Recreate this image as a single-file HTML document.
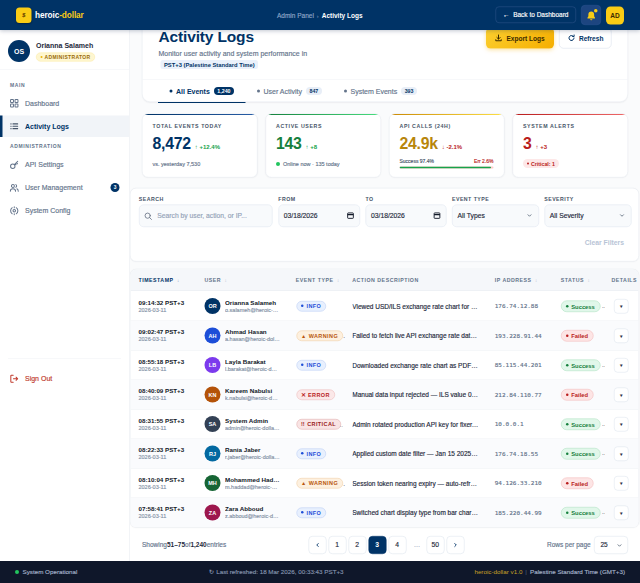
<!DOCTYPE html>
<html lang="en">
<head>
<meta charset="utf-8">
<title>Activity Logs - heroic-dollar</title>
<style>
*{box-sizing:border-box;margin:0;padding:0}
html,body{width:640px;height:583px;overflow:hidden;background:#fafbfc}
body{font-family:"Liberation Sans",Arial,sans-serif;color:#1e293b}
#app{-webkit-text-stroke:.3px currentColor;position:absolute;left:0;top:0;width:1280px;height:1166px;transform:scale(.5);transform-origin:0 0;overflow:hidden;background:#fafbfc}
/* ---------- top bar ---------- */
.top{position:absolute;left:0;top:0;width:1280px;height:60px;background:#003366;z-index:20;box-shadow:0 2px 8px rgba(10,30,70,.25)}
.logo{position:absolute;left:32px;top:14.500px;width:31px;height:31px;border-radius:7px;background:#facc15;box-shadow:0 1px 3px rgba(0,0,0,.3)}
.logo span{position:absolute;left:0;top:9px;width:31px;text-align:center;font-size:11px;font-weight:700;color:#6b4700;font-style:italic;line-height:13px}
.brand{position:absolute;left:70px;top:20px;font-size:16.500px;font-weight:700;color:#fff;letter-spacing:-.2px}
.brand b{color:#facc15}
.crumb{position:absolute;left:554px;top:24px;font-size:13px;color:#8fa6c8;white-space:nowrap}
.crumb i{font-style:normal;color:#5f7aa5;margin:0 6px;font-size:11px}
.crumb b{color:#fff}
.back{position:absolute;left:991px;top:13px;width:161px;height:33px;border:1px solid #33568d;border-radius:7px;color:#fff;font-size:13px;line-height:31px;text-align:center;white-space:nowrap}
.bell{position:absolute;left:1162px;top:10px;width:40px;height:40px;border-radius:8px;background:#1d4580;border:1px solid #2d5490}
.bell svg{position:absolute;left:8px;top:9px}
.bell em{position:absolute;left:25px;top:7px;width:7px;height:7px;border-radius:50%;background:#facc15}
.me{position:absolute;left:1212px;top:13px;width:36px;height:36px;border-radius:9px;background:#facc15;color:#3b2a00;font-size:13px;font-weight:700;text-align:center;line-height:36px}
/* ---------- sidebar ---------- */
.side{position:absolute;left:0;top:59px;width:259px;height:1063px;background:#fff;border-right:1px solid #e6eaf0;z-index:5}
.prof{position:absolute;left:0;top:0;width:258px;height:80px;border-bottom:1px solid #eef1f5}
.prof .av{position:absolute;left:16px;top:21px;width:44px;height:44px;border-radius:50%;background:#003366;color:#fff;font-size:14px;font-weight:700;text-align:center;line-height:44px}
.prof .nm{position:absolute;left:72px;top:23px;font-size:14px;font-weight:700;color:#1e293b;white-space:nowrap}
.prof .rl{position:absolute;left:72px;top:46px;height:18px;padding:0 8px;border-radius:9px;background:#fef6d0;border:1px solid #fbe9a0;color:#9a6b08;font-size:10px;font-weight:700;letter-spacing:.7px;line-height:16px;white-space:nowrap}
.prof .rl:before{content:"";display:inline-block;width:4px;height:4px;border-radius:50%;background:#eab308;margin-right:4px;vertical-align:1px}
.sec{position:absolute;left:20px;font-size:10px;font-weight:700;letter-spacing:1.2px;color:#64748b}
.it{position:absolute;left:0;width:258px;height:43px;font-size:14px;color:#64748b;line-height:42px;padding-left:50px;white-space:nowrap}
.it svg{position:absolute;left:19px;top:12px}
.it.on{background:#f1f4f8;color:#003366;font-weight:700;border-left:5px solid #003366;padding-left:45px}
.it.on svg{left:14px}
.it .ct{position:absolute;left:221px;top:12px;width:18px;height:18px;border-radius:50%;background:#003366;color:#fff;font-size:9.500px;font-weight:700;line-height:18px;text-align:center}
.sdiv{position:absolute;left:16px;top:657px;width:226px;height:1px;background:#eef1f5}
.out{color:#c0392b}
/* ---------- footer ---------- */
.foot{position:absolute;left:0;top:1122px;width:1280px;height:44px;background:#0f172a;z-index:20;color:#a3b1c9;font-size:12.5px;line-height:44px;white-space:nowrap}
.foot .l{position:absolute;left:30px}
.foot .l:before{content:"";display:inline-block;width:8px;height:8px;border-radius:50%;background:#22c55e;margin-right:7px;vertical-align:0}
.foot .c{position:absolute;left:418px;color:#8493ad}
.foot .r{position:absolute;right:30px}
.foot .r b{color:#c9a227;font-weight:400}
.foot .r i{font-style:normal;color:#44516b;margin:0 6px}
/* ---------- main ---------- */
.main{position:absolute;left:260px;top:59px;width:1020px;height:1063px;overflow:hidden}
.card{position:absolute;background:#fff;border:1px solid #e6eaf0;border-radius:14px;box-shadow:0 1px 3px rgba(15,23,42,.05)}
/* page header */
.ph{border-radius:16px}
.ph h1{position:absolute;left:32px;top:35px;font-size:31px;font-weight:700;color:#003366;letter-spacing:-.3px;white-space:nowrap}
.ph .sub{position:absolute;left:32px;top:79px;font-size:14px;color:#64748b;white-space:nowrap}
.ph .tz{position:absolute;left:36px;top:100px;height:18px;padding:0 7px;border-radius:5px;background:#eaf1fb;color:#003366;font-size:11.600px;font-weight:700;line-height:18px;white-space:nowrap}
.btn{position:absolute;top:35px;height:42px;border-radius:9px;font-size:13.1px;font-weight:700;line-height:43px;white-space:nowrap;text-align:left}
.btn svg{position:absolute;top:13px}
.exp{left:687px;width:136px;background:linear-gradient(135deg,#fccf2f,#f5ae00);color:#3b2a00;padding-left:41px;box-shadow:0 3px 8px rgba(245,179,1,.35)}
.exp svg{left:17px}
.ref{left:833px;width:105px;background:#fff;border:1px solid #d5dce8;color:#003366;padding-left:39px;line-height:41px}
.ref svg{left:16px;top:12px}
.tabs{position:absolute;left:0;top:139px;width:970px;height:45px;padding-left:31px;border-top:1px solid #eef1f5;display:flex}
.tab{height:44px;padding-left:23px;font-size:14px;color:#64748b;line-height:45px;white-space:nowrap;position:relative}
.tab i{display:inline-block;width:6px;height:6px;border-radius:50%;background:#64748b;margin-right:7px;vertical-align:2px}
.tab span{display:inline-block;margin-left:8px;height:16px;padding:0 7px;border-radius:8px;background:#e8eef7;color:#003366;font-size:10.500px;font-weight:700;line-height:16px;vertical-align:1px}
.tab.on{color:#003366;font-weight:700}
.tab.on:after{content:"";position:absolute;left:0;bottom:-2px;width:100%;height:2.500px;background:#003366}
.tab.on i{background:#003366}
.tab.on span{background:#003366;color:#fff}
/* stats */
.stat{top:168px;width:231px;height:128px;border-radius:12px;overflow:hidden}
.stat:before{content:"";position:absolute;left:0;top:0;width:100%;height:2px;background:linear-gradient(90deg,#003366,#2a5fa8)}
.s2:before{background:linear-gradient(90deg,#15803d,#4ade80)}.s3:before{background:linear-gradient(90deg,#ca8a04,#fde047)}.s4:before{background:linear-gradient(90deg,#b91c1c,#ef6a6a)}
.sl{position:absolute;left:20px;top:18px;font-size:10.500px;font-weight:700;letter-spacing:1.200px;color:#475569;white-space:nowrap}
.sv{position:absolute;left:20px;top:41px;white-space:nowrap}
.sv b{font-size:31.600px;font-weight:700;color:#003366;letter-spacing:-.5px}
.s2 .sv b{color:#15803d}.s3 .sv b{color:#b8860b}.s4 .sv b{color:#b91c1c}
.sv span{font-size:12px;font-weight:700;margin-left:8px}
.up{color:#16a34a}.dn{color:#b91c1c}
.sn{position:absolute;left:20px;top:94px;font-size:11px;color:#64748b;white-space:nowrap}
.gd{display:inline-block;width:8px;height:8px;border-radius:50%;background:#22c55e;margin-right:6px}
.sr{position:absolute;left:20px;top:89px;width:188px;font-size:10px;color:#475569}
.sr em{position:absolute;right:0;top:0;font-style:normal;color:#b91c1c}
.bar{position:absolute;left:20px;top:105px;width:188px;height:4px;border-radius:2px;background:#fecaca;overflow:hidden}
.bar u{display:block;width:97.400%;height:4px;background:#16a34a;border-radius:2px}
.cr{position:absolute;left:20px;top:90px;height:18px;padding:0 8px;border-radius:10px;background:#fde8e8;color:#b91c1c;font-size:10.500px;font-weight:700;line-height:18px;white-space:nowrap}
.cr i{display:inline-block;width:4px;height:4px;border-radius:50%;background:#b91c1c;margin-right:4px;vertical-align:2px}
/* filters */
.fl{border-radius:12px}
.fg{position:absolute;top:14px}
.fg label{display:block;font-size:10.500px;font-weight:700;letter-spacing:.9px;color:#475569;height:18px;line-height:14px}
.in{position:relative;width:100%;height:45px;border:1px solid #dde4ee;border-radius:9px;background:#f8fafc;font-size:13.500px;color:#1e293b;line-height:43px;padding-left:10px;white-space:nowrap}
.in svg{position:absolute}
.fg:first-child .in svg{left:9px;top:14px}
.phd{margin-left:26px;color:#94a3b8;font-size:13.500px}
.dt svg{right:10px;top:13px}
.sel svg{right:12px;top:15px}
.clr{position:absolute;right:29px;top:100px;font-size:13.600px;font-weight:700;color:#b8c4d6;white-space:nowrap}
/* table */
.tb{border-radius:12px;overflow:hidden}
.th{position:absolute;left:0;top:0;width:100%;height:43px;background:#f5f7fa;border-bottom:1px solid #e6eaf0}
.h{position:absolute;top:15px;font-size:10.500px;font-weight:700;letter-spacing:1px;color:#64748b;white-space:nowrap}
.h i{font-style:normal;font-weight:400;font-size:9px;color:#b6c0cf;margin-left:7px;letter-spacing:0}
.h.on{color:#003366}.h.on i{color:#7d93b5}
.tr{position:absolute;left:0;width:100%;height:59px;border-bottom:1px solid #eef1f5}
.tr.ev{background:#fafbfd}
.tr>div{position:absolute;top:0;height:59px;white-space:nowrap}
.c1{left:16px}
.c1 b{position:absolute;left:0;top:15px;font-size:12.400px;color:#111827}
.c1 span{position:absolute;left:0;top:30px;font-size:11px;color:#8391a5}
.c2{left:148px;width:175px}
.ua{position:absolute;left:0;top:13px;width:32px;height:32px;border-radius:50%;color:#fff;font-size:11px;font-weight:700;text-align:center;line-height:32px}
.un{position:absolute;left:41px;top:0;width:110px}
.un b{position:absolute;left:0;top:15px;width:110px;font-size:12.500px;color:#111827;overflow:hidden;text-overflow:ellipsis}
.un span{position:absolute;left:0;top:30px;width:110px;font-size:11px;color:#8391a5;overflow:hidden;text-overflow:ellipsis}
.c3{left:331px}
.bd{position:absolute;left:1px;top:19px;height:21px;padding:0 9px 0 8px;border-radius:11px;font-size:11px;font-weight:700;letter-spacing:.8px;line-height:19px;border:1px solid}
.bd i{font-style:normal;font-size:9.500px;margin-right:5px;letter-spacing:0;vertical-align:.5px}
.bd i.d,.st i.d{display:inline-block;width:5px;height:5px;border-radius:50%;background:currentColor;vertical-align:2px;margin-right:6px}
.b-info{background:#e8f0fe;border-color:#b4c9f3;color:#1d4ed8}
.b-warn{background:#fdf0df;border-color:#efc99a;color:#b8560e}
.b-err{background:#fbe8e8;border-color:#eab4b4;color:#b91c1c}
.b-crit{background:#f9e4e4;border-color:#dca4a4;color:#991b1b}
.b-crit i{font-size:11px;vertical-align:0}
.b-warn i{font-size:10.500px;vertical-align:0}
.b-err i{font-size:11px;vertical-align:0;font-weight:700}
.c4{left:443.500px;width:253.500px;font-size:13px;color:#1e293b;line-height:59px;overflow:hidden;text-overflow:ellipsis}
.c5{left:728.500px;font-family:"DejaVu Sans Mono","Liberation Mono",monospace;font-size:12px;color:#64748b;line-height:59px}
.c6{left:860.500px}
.st{position:absolute;left:0;top:18px;height:23px;padding:0 10px 0 9px;border-radius:12px;font-size:11.600px;font-weight:700;line-height:21px;border:1px solid}
.st i{font-style:normal;font-size:9.500px;margin-right:5px;vertical-align:.5px}
.st.ok{background:#e1f7ea;border-color:#a9dfbd;color:#15803d}
.st.fail{background:#fde5e5;border-color:#f0b4b4;color:#b91c1c}
.c7{left:967px}
.db{position:absolute;left:0;top:15px;width:29px;height:29px;border:1px solid #d9e0ea;border-radius:7px;background:#fff;font-size:10px;color:#1e293b;text-align:center;line-height:27px}
/* pagination */
.pgbg{position:absolute;left:0;top:990px;width:1020px;height:80px;background:#fff}
.pg{position:absolute;left:0;top:1013px;width:1020px;height:36px;font-size:13px;color:#64748b;white-space:nowrap}
.sh{position:absolute;left:24px;top:0;line-height:36px;font-size:13px}
.sh b{color:#1e293b}
.pb{position:absolute;top:0;margin-left:-1.500px;width:36px;height:36px;border:1px solid #d9e0ea;border-radius:8px;background:#fff;color:#1e293b;font-size:13.500px;text-align:center;line-height:34px}
.pb svg{position:absolute;left:11px;top:11px}
.pb.on{background:#003366;border-color:#003366;color:#fff;font-weight:700}
.pe{position:absolute;top:0;width:32px;text-align:center;line-height:36px;color:#94a3b8}
.rp{position:absolute;left:834px;top:0;line-height:36px;font-size:13px;color:#64748b}
.rs{position:absolute;left:928px;top:0;width:68px;height:36px;border:1px solid #d9e0ea;border-radius:8px;background:#fff;color:#1e293b;font-size:13px;line-height:34px;padding-left:12px}
.rs svg{position:absolute;right:10px;top:12px}

#app b,#app h1,.it.on,.tab.on,.sl,.fg label,.h,.bd,.st,.btn,.nm,.rl,.sec,.brand,.me,.av,.ua,.tz,.cr,.clr,.sv span,.tab span,.ct,.pb.on{-webkit-text-stroke:0 transparent}
.el{position:absolute;top:22px;height:16px;overflow:hidden;text-decoration:none;font-size:13px;color:#64748b;line-height:16px;letter-spacing:0}
</style>
</head>
<body>
<div id="app">

<div class="top">
  <div class="logo"><span>$</span></div>
  <div class="brand">heroic<b>-dollar</b></div>
  <div class="crumb">Admin Panel<i>›</i><b>Activity Logs</b></div>
  <div class="back">←&nbsp; Back to Dashboard</div>
  <div class="bell"><svg width="23" height="23" viewBox="0 0 20 20"><path d="M10 2.5c-3 0-5 2.2-5 5.2v3.3l-1.6 2.6c-.3.5 0 1.1.6 1.1h12c.6 0 .9-.6.6-1.1L15 11V7.700c0-3-2-5.200-5-5.200z" fill="#facc15"/><path d="M8 16h4a2 2 0 0 1-4 0z" fill="#facc15"/></svg><em></em></div>
  <div class="me">AD</div>
</div>

<div class="side">
  <div class="prof">
    <div class="av">OS</div>
    <div class="nm">Orianna Salameh</div>
    <div class="rl">ADMINISTRATOR</div>
  </div>
  <div class="sec" style="top:105px">MAIN</div>
  <div class="it" style="top:125.500px"><svg width="19" height="19" viewBox="0 0 18 18" fill="none" stroke="#64748b" stroke-width="1.9"><rect x="2" y="2" width="5.500" height="5.500" rx="1"/><rect x="10.500" y="2" width="5.500" height="5.500" rx="1"/><rect x="2" y="10.500" width="5.500" height="5.500" rx="1"/><rect x="10.500" y="10.500" width="5.500" height="5.500" rx="1"/></svg>Dashboard</div>
  <div class="it on" style="top:172px"><svg width="19" height="19" viewBox="0 0 18 18" fill="none" stroke="#475569" stroke-width="1.9" stroke-linecap="round"><path d="M6.500 4.500h9M6.500 9h9M6.500 13.500h9M2.500 4.500h.6M2.500 9h.6M2.500 13.500h.6"/></svg>Activity Logs</div>
  <div class="sec" style="top:228px">ADMINISTRATION</div>
  <div class="it" style="top:249px"><svg width="19" height="19" viewBox="0 0 18 18" fill="none" stroke="#64748b" stroke-width="1.9" stroke-linecap="round"><circle cx="6.200" cy="11.800" r="4.200"/><path d="M9.200 8.800L15.500 2.500M13 5l2.200 2.200M10.800 7.200l1.600 1.600"/></svg>API Settings</div>
  <div class="it" style="top:295px"><svg width="19" height="19" viewBox="0 0 18 18" fill="none" stroke="#64748b" stroke-width="1.9" stroke-linecap="round"><circle cx="6.500" cy="5.500" r="2.800"/><path d="M1.500 15.500c0-3 2-4.800 5-4.800s5 1.800 5 4.800M12 3a2.800 2.800 0 0 1 0 5M14 11c1.700.6 2.600 2.200 2.600 4.400"/></svg>User Management<span class="ct">3</span></div>
  <div class="it" style="top:341px"><svg width="19" height="19" viewBox="0 0 18 18" fill="none" stroke="#64748b" stroke-width="1.9" stroke-linecap="round"><circle cx="9" cy="9" r="2.400"/><path d="M5.200 3.200A7 7 0 0 0 5.200 14.800M12.800 3.200A7 7 0 0 1 12.800 14.800M9 1.500v1.800M9 14.700v1.800"/></svg>System Config</div>
  <div class="sdiv"></div>
  <div class="it out" style="top:677px"><svg width="19" height="19" viewBox="0 0 18 18" fill="none" stroke="#c0392b" stroke-width="1.9" stroke-linecap="round" stroke-linejoin="round"><path d="M7 2.500H3.500a1 1 0 0 0-1 1v11a1 1 0 0 0 1 1H7M7.500 9h8M12.500 6l3 3-3 3"/></svg>Sign Out</div>
</div>

<div class="main">
  <!-- page header -->
  <div class="card ph" style="left:24px;top:-40px;width:972px;height:185px">
    <h1>Activity Logs</h1>
    <p class="sub">Monitor user activity and system performance in</p>
    <span class="tz">PST+3 (Palestine Standard Time)</span>
    <div class="btn exp"><svg width="16" height="16" viewBox="0 0 16 16" fill="none" stroke="#3b2a00" stroke-width="2" stroke-linecap="round" stroke-linejoin="round"><path d="M8 2v8M4.800 7L8 10.200 11.200 7M2.500 11.500v2h11v-2"/></svg>Export Logs</div>
    <div class="btn ref"><svg width="16" height="16" viewBox="0 0 16 16" fill="none" stroke="#003366" stroke-width="2" stroke-linecap="round" stroke-linejoin="round"><path d="M13 8a5 5 0 1 1-1.600-3.700M13.200 2v3h-3"/></svg>Refresh</div>
    <div class="tabs">
      <div class="tab on" style="width:175px"><i></i>All Events<span>1,240</span></div>
      <div class="tab" style="width:174px"><i></i>User Activity<span>847</span></div>
      <div class="tab" style="width:185px"><i></i>System Events<span>393</span></div>
    </div>
  </div>

  <!-- stats -->
  <div class="card stat s1" style="left:24px">
    <div class="sl">TOTAL EVENTS TODAY</div>
    <div class="sv"><b>8,472</b><span class="up">↑ +12.4%</span></div>
    <div class="sn">vs. yesterday 7,530</div>
  </div>
  <div class="card stat s2" style="left:271px">
    <div class="sl">ACTIVE USERS</div>
    <div class="sv"><b>143</b><span class="up">↑ +8</span></div>
    <div class="sn"><i class="gd"></i>Online now · 135 today</div>
  </div>
  <div class="card stat s3" style="left:518px">
    <div class="sl">API CALLS (24H)</div>
    <div class="sv"><b>24.9k</b><span class="dn">↓ -2.1%</span></div>
    <div class="sr"><span>Success 97.4%</span><em>Err 2.6%</em></div>
    <div class="bar"><u></u></div>
  </div>
  <div class="card stat s4" style="left:765px">
    <div class="sl">SYSTEM ALERTS</div>
    <div class="sv"><b>3</b><span class="dn">↑ +3</span></div>
    <div class="cr"><i></i>Critical: 1</div>
  </div>

  <!-- filters -->
  <div class="card fl" style="left:0;top:317px;width:1018px;height:147px">
    <div class="fg" style="left:16.500px;width:267px"><label>SEARCH</label><div class="in"><svg width="17" height="17" viewBox="0 0 15 15" fill="none" stroke="#6b7688" stroke-width="1.500" stroke-linecap="round"><circle cx="6.500" cy="6.500" r="4.600"/><path d="M10 10l3.200 3.200"/></svg><span class="phd">Search by user, action, or IP...</span></div></div>
    <div class="fg" style="left:295.500px;width:163px"><label>FROM</label><div class="in dt">03/18/2026<svg width="16" height="16" viewBox="0 0 14 14" fill="none" stroke="#111827" stroke-width="1.600"><rect x="2" y="2.500" width="10" height="9.500" rx="1"/><path d="M2 5.500h10" stroke-width="2.200"/></svg></div></div>
    <div class="fg" style="left:470px;width:162px"><label>TO</label><div class="in dt">03/18/2026<svg width="16" height="16" viewBox="0 0 14 14" fill="none" stroke="#111827" stroke-width="1.600"><rect x="2" y="2.500" width="10" height="9.500" rx="1"/><path d="M2 5.500h10" stroke-width="2.200"/></svg></div></div>
    <div class="fg" style="left:643px;width:174px"><label>EVENT TYPE</label><div class="in sel">All Types<svg width="12" height="12" viewBox="0 0 12 12" fill="none" stroke="#475569" stroke-width="1.500" stroke-linecap="round" stroke-linejoin="round"><path d="M3 4.500l3 3 3-3"/></svg></div></div>
    <div class="fg" style="left:827.500px;width:174px"><label>SEVERITY</label><div class="in sel">All Severity<svg width="12" height="12" viewBox="0 0 12 12" fill="none" stroke="#475569" stroke-width="1.500" stroke-linecap="round" stroke-linejoin="round"><path d="M3 4.500l3 3 3-3"/></svg></div></div>
    <div class="clr">Clear Filters</div>
  </div>

  <!-- table -->
  <div class="pgbg"></div>
  <div class="card tb" style="left:0;top:479px;width:1018px;height:517px">
  <div class="th">
    <div class="h on" style="left:16px">TIMESTAMP<i>↓</i></div>
    <div class="h" style="left:148px">USER<i>↕</i></div>
    <div class="h" style="left:330.500px">EVENT TYPE<i>↕</i></div>
    <div class="h" style="left:443.500px">ACTION DESCRIPTION</div>
    <div class="h" style="left:728.500px">IP ADDRESS<i>↕</i></div>
    <div class="h" style="left:860.500px">STATUS<i>↕</i></div>
    <div class="h" style="left:962px">DETAILS</div>
  </div>
  <div class="tr" style="top:44px">
    <div class="c1"><b>09:14:32 PST+3</b><span>2026-03-11</span></div>
    <div class="c2"><div class="ua" style="background:#003366">OR</div><div class="un"><b>Orianna Salameh</b><span>o.salameh@heroic-dollar.io</span></div></div>
    <div class="c3"><span class="bd b-info"><i class="d"></i>INFO</span></div>
    <div class="c4">Viewed USD/ILS exchange rate chart for March 2026</div>
    <div class="c5">176.74.12.88</div>
    <div class="c6"><span class="st ok"><i class="d"></i>Success</span><u class="el" style="left:82px;width:6px;top:20px">…</u></div>
    <div class="c7"><span class="db">▾</span></div>
  </div>
  <div class="tr ev" style="top:103px">
    <div class="c1"><b>09:02:47 PST+3</b><span>2026-03-11</span></div>
    <div class="c2"><div class="ua" style="background:#1d4ed8">AH</div><div class="un"><b>Ahmad Hasan</b><span>a.hasan@heroic-dollar.io</span></div></div>
    <div class="c3"><u class="el" style="left:94px;width:4px">…</u><span class="bd b-warn"><i>▲</i>WARNING</span></div>
    <div class="c4">Failed to fetch live API exchange rate data from provider</div>
    <div class="c5">193.228.91.44</div>
    <div class="c6"><span class="st fail"><i class="d"></i>Failed</span></div>
    <div class="c7"><span class="db">▾</span></div>
  </div>
  <div class="tr" style="top:162px">
    <div class="c1"><b>08:55:18 PST+3</b><span>2026-03-11</span></div>
    <div class="c2"><div class="ua" style="background:#7c3aed">LB</div><div class="un"><b>Layla Barakat</b><span>l.barakat@heroic-dollar.io</span></div></div>
    <div class="c3"><span class="bd b-info"><i class="d"></i>INFO</span></div>
    <div class="c4">Downloaded exchange rate chart as PDF report</div>
    <div class="c5">85.115.44.201</div>
    <div class="c6"><span class="st ok"><i class="d"></i>Success</span><u class="el" style="left:82px;width:6px;top:20px">…</u></div>
    <div class="c7"><span class="db">▾</span></div>
  </div>
  <div class="tr ev" style="top:221px">
    <div class="c1"><b>08:40:09 PST+3</b><span>2026-03-11</span></div>
    <div class="c2"><div class="ua" style="background:#b45309">KN</div><div class="un"><b>Kareem Nabulsi</b><span>k.nabulsi@heroic-dollar.io</span></div></div>
    <div class="c3"><span class="bd b-err"><i>✕</i>ERROR</span></div>
    <div class="c4">Manual data input rejected — ILS value 0.00 out of range</div>
    <div class="c5">212.84.110.77</div>
    <div class="c6"><span class="st fail"><i class="d"></i>Failed</span></div>
    <div class="c7"><span class="db">▾</span></div>
  </div>
  <div class="tr" style="top:280px">
    <div class="c1"><b>08:31:55 PST+3</b><span>2026-03-11</span></div>
    <div class="c2"><div class="ua" style="background:#334155">SA</div><div class="un"><b>System Admin</b><span>admin@heroic-dollar.io</span></div></div>
    <div class="c3"><u class="el" style="left:86px;width:7px">…</u><span class="bd b-crit"><i>!!</i>CRITICAL</span></div>
    <div class="c4">Admin rotated production API key for fixer.io provider</div>
    <div class="c5">10.0.0.1</div>
    <div class="c6"><span class="st ok"><i class="d"></i>Success</span><u class="el" style="left:82px;width:6px;top:20px">…</u></div>
    <div class="c7"><span class="db">▾</span></div>
  </div>
  <div class="tr ev" style="top:339px">
    <div class="c1"><b>08:22:33 PST+3</b><span>2026-03-11</span></div>
    <div class="c2"><div class="ua" style="background:#0369a1">RJ</div><div class="un"><b>Rania Jaber</b><span>r.jaber@heroic-dollar.io</span></div></div>
    <div class="c3"><span class="bd b-info"><i class="d"></i>INFO</span></div>
    <div class="c4">Applied custom date filter — Jan 15 2025 to Mar 10 2026</div>
    <div class="c5">176.74.18.55</div>
    <div class="c6"><span class="st ok"><i class="d"></i>Success</span><u class="el" style="left:82px;width:6px;top:20px">…</u></div>
    <div class="c7"><span class="db">▾</span></div>
  </div>
  <div class="tr" style="top:398px">
    <div class="c1"><b>08:10:04 PST+3</b><span>2026-03-11</span></div>
    <div class="c2"><div class="ua" style="background:#166534">MH</div><div class="un"><b>Mohammed Haddad</b><span>m.haddad@heroic-dollar.io</span></div></div>
    <div class="c3"><u class="el" style="left:94px;width:4px">…</u><span class="bd b-warn"><i>▲</i>WARNING</span></div>
    <div class="c4">Session token nearing expiry — auto-refresh triggered</div>
    <div class="c5">94.126.33.210</div>
    <div class="c6"><span class="st fail"><i class="d"></i>Failed</span></div>
    <div class="c7"><span class="db">▾</span></div>
  </div>
  <div class="tr ev" style="top:457px">
    <div class="c1"><b>07:58:41 PST+3</b><span>2026-03-11</span></div>
    <div class="c2"><div class="ua" style="background:#9d174d">ZA</div><div class="un"><b>Zara Abboud</b><span>z.abboud@heroic-dollar.io</span></div></div>
    <div class="c3"><span class="bd b-info"><i class="d"></i>INFO</span></div>
    <div class="c4">Switched chart display type from bar chart to line chart</div>
    <div class="c5">185.220.44.99</div>
    <div class="c6"><span class="st ok"><i class="d"></i>Success</span><u class="el" style="left:82px;width:6px;top:20px">…</u></div>
    <div class="c7"><span class="db">▾</span></div>
  </div>
  </div>

  <!-- pagination -->
  <div class="pg">
    <div class="sh">Showing<b>51–75</b>of<b>1,240</b>entries</div>
    <div class="pb" style="left:358px"><svg width="12" height="12" viewBox="0 0 12 12" fill="none" stroke="#003366" stroke-width="1.800" stroke-linecap="round" stroke-linejoin="round"><path d="M7.500 3L4.500 6l3 3"/></svg></div>
    <div class="pb" style="left:398px">1</div>
    <div class="pb" style="left:438px">2</div>
    <div class="pb on" style="left:478px">3</div>
    <div class="pb" style="left:518px">4</div>
    <div class="pe" style="left:558px">…</div>
    <div class="pb" style="left:594px">50</div>
    <div class="pb" style="left:634px"><svg width="12" height="12" viewBox="0 0 12 12" fill="none" stroke="#003366" stroke-width="1.800" stroke-linecap="round" stroke-linejoin="round"><path d="M4.500 3l3 3-3 3"/></svg></div>
    <div class="rp">Rows per page</div>
    <div class="rs">25<svg width="12" height="12" viewBox="0 0 12 12" fill="none" stroke="#475569" stroke-width="1.500" stroke-linecap="round" stroke-linejoin="round"><path d="M3 4.500l3 3 3-3"/></svg></div>
  </div>

</div>

<div class="foot">
  <div class="l">System Operational</div>
  <div class="c">↻ Last refreshed: 18 Mar 2026, 00:33:43 PST+3</div>
  <div class="r"><b>heroic-dollar v1.0</b><i>|</i>Palestine Standard Time (GMT+3)</div>
</div>

</div>
</body>
</html>
